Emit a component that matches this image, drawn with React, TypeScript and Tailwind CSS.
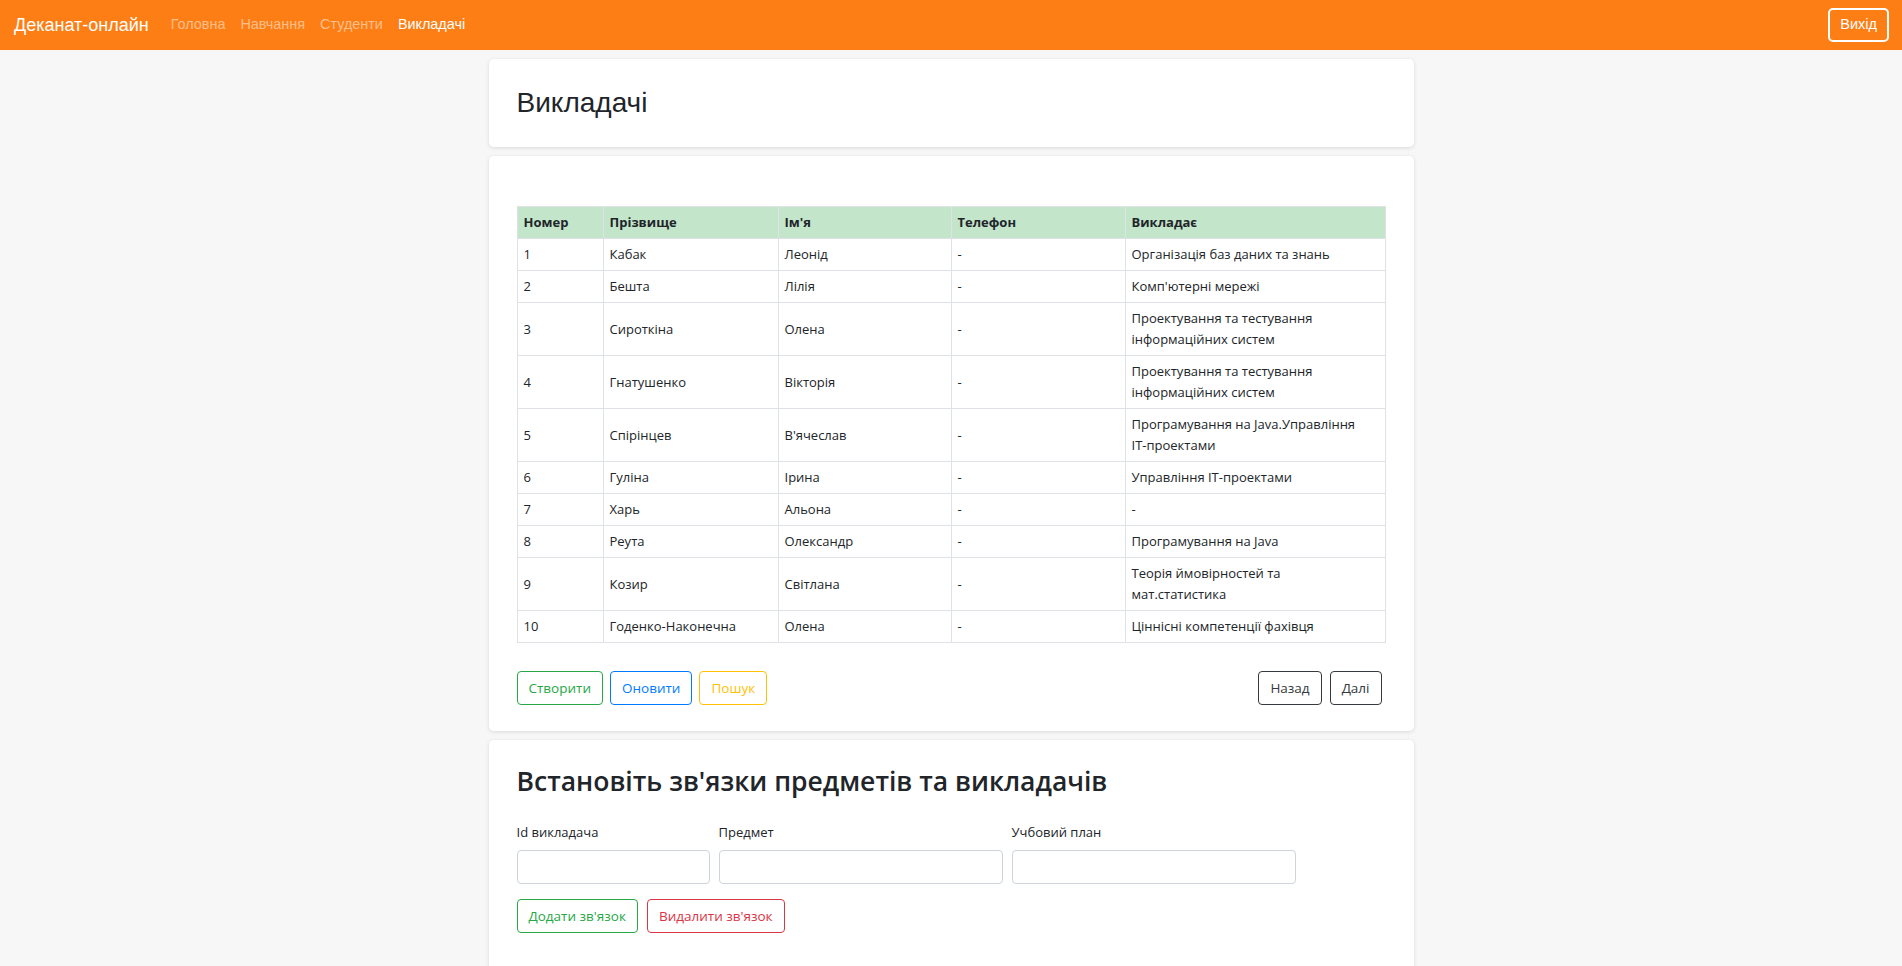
import React from "react";

type Row = { n: string; s: string; f: string; p: string; t: React.ReactNode; two?: boolean };

const rows: Row[] = [
  { n: "1", s: "Кабак", f: "Леонід", p: "-", t: "Організація баз даних та знань" },
  { n: "2", s: "Бешта", f: "Лілія", p: "-", t: "Комп'ютерні мережі" },
  { n: "3", s: "Сироткіна", f: "Олена", p: "-", t: <>Проектування та тестування<br />інформаційних систем</>, two: true },
  { n: "4", s: "Гнатушенко", f: "Вікторія", p: "-", t: <>Проектування та тестування<br />інформаційних систем</>, two: true },
  { n: "5", s: "Спірінцев", f: "В'ячеслав", p: "-", t: <>Програмування на Java.Управління<br />IT-проектами</>, two: true },
  { n: "6", s: "Гуліна", f: "Ірина", p: "-", t: "Управління IT-проектами" },
  { n: "7", s: "Харь", f: "Альона", p: "-", t: "-" },
  { n: "8", s: "Реута", f: "Олександр", p: "-", t: "Програмування на Java" },
  { n: "9", s: "Козир", f: "Світлана", p: "-", t: <>Теорія ймовірностей та<br />мат.статистика</>, two: true },
  { n: "10", s: "Годенко-Наконечна", f: "Олена", p: "-", t: "Ціннісні компетенції фахівця" },
];

const cell = "border border-[#dee2e6] px-[6px] py-[5px] align-middle text-left";
const btn = "h-[34px] px-[11px] border rounded-[4px] text-[13.5px]";

export default function App() {
  return (
    <div className="min-h-screen bg-[#f7f7f7] font-['Open_Sans',sans-serif] text-[#212529]">
      <nav className="h-[50px] bg-[#fd7e14] flex items-center pl-[14px] pr-[13px] font-['Liberation_Sans',Arial,sans-serif]">
        <span className="text-white text-[18px] mr-[22px]">Деканат-онлайн</span>
        <div className="flex gap-[15px] text-[14.4px]">
          <span className="text-white/50">Головна</span>
          <span className="text-white/50">Навчання</span>
          <span className="text-white/50">Студенти</span>
          <span className="text-white">Викладачі</span>
        </div>
        <button className="ml-auto h-[34px] px-[10px] border-2 border-white rounded-[5px] text-white text-[14.5px]">
          Вихід
        </button>
      </nav>

      <main className="w-[925px] mx-auto pt-[9px] flex flex-col gap-[9px]">
        <section className="h-[88px] bg-white rounded-[5px] shadow-[0_1px_4px_rgba(0,0,0,0.12)] px-[28px] flex items-center">
          <h1 className="font-['Liberation_Sans',Arial,sans-serif] text-[28px] text-[#212529]">Викладачі</h1>
        </section>

        <section className="bg-white rounded-[5px] shadow-[0_1px_4px_rgba(0,0,0,0.12)] pt-[50px] px-[28px] pb-[26px]">
          <table className="w-[868px] border-collapse text-[13px] leading-[21px] table-fixed">
            <colgroup>
              <col className="w-[86px]" />
              <col className="w-[175px]" />
              <col className="w-[173px]" />
              <col className="w-[174px]" />
              <col className="w-[260px]" />
            </colgroup>
            <thead>
              <tr className="bg-[#c3e6cb] font-bold">
                <th className={cell}>Номер</th>
                <th className={cell}>Прізвище</th>
                <th className={cell}>Ім'я</th>
                <th className={cell}>Телефон</th>
                <th className={cell}>Викладає</th>
              </tr>
            </thead>
            <tbody>
              {rows.map((r) => (
                <tr key={r.n}>
                  <td className={cell}>{r.n}</td>
                  <td className={cell}>{r.s}</td>
                  <td className={cell}>{r.f}</td>
                  <td className={cell}>{r.p}</td>
                  <td className={cell}>{r.t}</td>
                </tr>
              ))}
            </tbody>
          </table>

          <div className="mt-[28px] flex items-center">
            <div className="flex gap-[7px]">
              <button className={`${btn} border-[#28a745] text-[#28a745]`}>Створити</button>
              <button className={`${btn} border-[#007bff] text-[#007bff]`}>Оновити</button>
              <button className={`${btn} border-[#ffc107] text-[#ffc107]`}>Пошук</button>
            </div>
            <div className="ml-auto flex gap-[8px] mr-[4px]">
              <button className={`${btn} border-[#343a40] text-[#343a40]`}>Назад</button>
              <button className={`${btn} border-[#343a40] text-[#343a40]`}>Далі</button>
            </div>
          </div>
        </section>

        <section className="bg-white rounded-[5px] shadow-[0_1px_4px_rgba(0,0,0,0.12)] pt-[23px] px-[28px] pb-[40px]">
          <h2 className="text-[26.5px] leading-[36px] font-semibold">Встановіть зв'язки предметів та викладачів</h2>
          <div className="mt-[23px] flex gap-[9px] text-[13px] leading-[21px]">
            <div className="w-[193px] flex flex-col">
              <label className="mb-[7px]">Id викладача</label>
              <input className="h-[34px] border border-[#ced4da] rounded-[4px]" />
            </div>
            <div className="w-[284px] flex flex-col">
              <label className="mb-[7px]">Предмет</label>
              <input className="h-[34px] border border-[#ced4da] rounded-[4px]" />
            </div>
            <div className="w-[284px] flex flex-col">
              <label className="mb-[7px]">Учбовий план</label>
              <input className="h-[34px] border border-[#ced4da] rounded-[4px]" />
            </div>
          </div>
          <div className="mt-[15px] flex gap-[9px]">
            <button className={`${btn} border-[#28a745] text-[#28a745]`}>Додати зв'язок</button>
            <button className={`${btn} border-[#dc3545] text-[#dc3545]`}>Видалити зв'язок</button>
          </div>
        </section>
      </main>
    </div>
  );
}
